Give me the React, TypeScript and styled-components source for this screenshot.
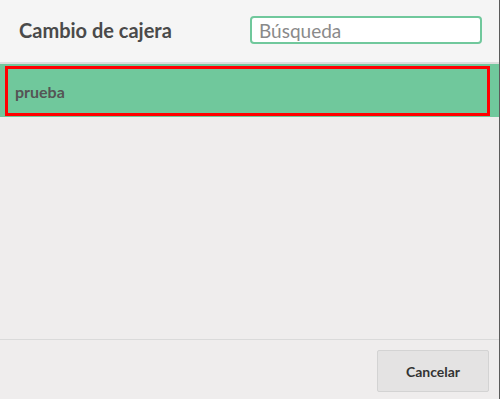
import React, { FC } from "react";
import styled, { createGlobalStyle } from "styled-components";

const GlobalStyle = createGlobalStyle`
    html, body {
        margin: 0;
        padding: 0;
        background: #efeded;
    }
    * {
        box-sizing: border-box;
    }
`

const Modal = styled.div`
    width: 500px;
    height: 399px;
    display: flex;
    flex-direction: column;
    background: #efeded;
    border-right: 1px solid #5b5b5b;
    font-family: Lato, "Open Sans", sans-serif;
`

const Header = styled.div`
    height: 64px;
    flex-shrink: 0;
    display: flex;
    align-items: center;
    justify-content: space-between;
    padding: 0 17px 2px 19px;
    background: #f5f5f5;
    border-bottom: 2px solid #dcdcdc;
`

const Title = styled.h1`
    margin: 0;
    font-size: 20px;
    font-weight: bold;
    color: #4a4a4a;
`

const Search = styled.input`
    width: 232px;
    height: 28px;
    padding: 0 7px;
    border: 2px solid #70c89c;
    border-radius: 4px;
    background: #fff;
    font-family: Lato, "Open Sans", sans-serif;
    font-size: 19px;
    color: #444;
    outline: none;

    &::placeholder {
        color: #8a8a8a;
    }
`

const List = styled.div`
    flex: 1;
`

const Row = styled.div<{ $selected?: boolean }>`
    height: 53px;
    padding: 2px 9px 1px 5px;
    background: ${p => (p.$selected ? "#70c89c" : "transparent")};
`

const RowInner = styled.div<{ $focused?: boolean }>`
    height: 100%;
    display: flex;
    align-items: center;
    padding-left: 7px;
    border: 3px solid ${p => (p.$focused ? "#ff0000" : "transparent")};
    font-size: 16px;
    font-weight: bold;
    color: #555;
`

const Footer = styled.div`
    height: 60px;
    flex-shrink: 0;
    display: flex;
    align-items: flex-start;
    justify-content: flex-end;
    padding: 10px 10px 0 0;
    border-top: 1px solid #dadada;
`

const Button = styled.button`
    width: 112px;
    height: 42px;
    background: #e4e3e3;
    border: 1px solid #d3d3d3;
    border-radius: 2px;
    font-family: Lato, "Open Sans", sans-serif;
    font-size: 14px;
    font-weight: bold;
    color: #333;
    cursor: pointer;
`

const cashiers = ["prueba"]

const App: FC = () => {
    return (
        <>
            <GlobalStyle />
            <Modal>
                <Header>
                    <Title>Cambio de cajera</Title>
                    <Search placeholder="Búsqueda" />
                </Header>
                <List>
                    {cashiers.map((name, i) => (
                        <Row key={name} $selected={i === 0}>
                            <RowInner $focused={i === 0}>{name}</RowInner>
                        </Row>
                    ))}
                </List>
                <Footer>
                    <Button>Cancelar</Button>
                </Footer>
            </Modal>
        </>
    )
}

export default App
